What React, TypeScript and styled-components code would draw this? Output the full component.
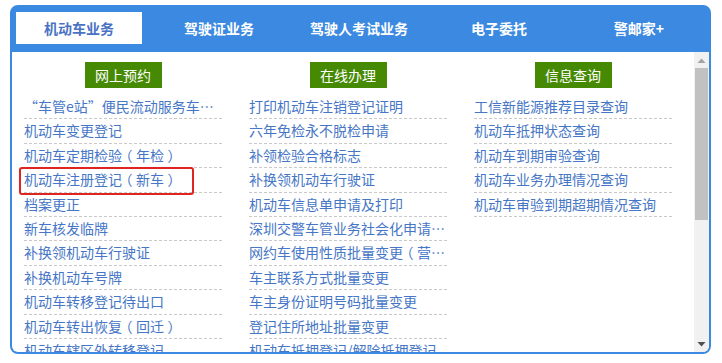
import React from 'react'
import styled, { createGlobalStyle } from 'styled-components'

const GlobalStyle = createGlobalStyle`
  html, body {
    margin: 0;
    padding: 0;
    background: #ffffff;
  }
  body {
    font-family: 'Noto Sans CJK SC', 'Noto Sans', sans-serif;
  }
`

const Page = styled.div`
  padding: 5px 0 0 10px;
`

const Panel = styled.div`
  width: 701px;
  height: 349px;
  box-sizing: border-box;
  border: 2px solid #3b89e0;
  border-radius: 8px;
  background: #3b89e0;
  overflow: hidden;
  display: flex;
  flex-direction: column;
`

const TabBar = styled.div`
  display: flex;
  gap: 14px;
  height: 45px;
  box-sizing: border-box;
  padding: 5px 0 0 4px;
  flex: none;
`

const Tab = styled.div<{ $active?: boolean }>`
  width: 126px;
  height: 32px;
  display: flex;
  align-items: center;
  justify-content: center;
  font-size: 14px;
  font-weight: 700;
  color: ${(p) => (p.$active ? '#4a72c4' : '#ffffff')};
  background: ${(p) => (p.$active ? '#ffffff' : 'transparent')};
  cursor: pointer;
`

const Body = styled.div`
  height: 300px;
  background: #ffffff;
  display: flex;
`

const Columns = styled.div`
  flex: 1;
  overflow: hidden;
  display: grid;
  grid-template-columns: repeat(3, 225px);
  align-items: start;
`

const ScrollRail = styled.div`
  width: 15px;
  flex: none;
  background: #f1f1f1;
  display: flex;
  flex-direction: column;
`

const ScrollButton = styled.div`
  height: 16px;
  flex: none;
  display: flex;
  align-items: center;
  justify-content: center;
`

const ScrollTrack = styled.div`
  flex: 1;
  padding: 0 1px;
`

const ScrollThumb = styled.div`
  height: 152px;
  background: #c1c1c1;
`

const Column = styled.div`
  padding: 10px 15px 0 12px;
  display: flex;
  flex-direction: column;
  align-items: center;
`

const GreenButton = styled.div`
  width: 77px;
  height: 26px;
  background: #468a04;
  color: #ffffff;
  font-size: 14px;
  display: flex;
  align-items: center;
  justify-content: center;
  margin-bottom: 7px;
`

const List = styled.ul`
  list-style: none;
  margin: 0;
  padding: 0;
  width: 198px;
`

const Item = styled.li<{ $marked?: boolean }>`
  position: relative;
  height: 24.4px;
  box-sizing: border-box;
  line-height: 23.4px;
  border-bottom: 1px dashed #c9c9c9;
  font-size: 14px;

  ${(p) =>
    p.$marked &&
    `
    &::after {
      content: '';
      position: absolute;
      left: -5px;
      top: -1px;
      width: 175px;
      height: 28px;
      box-sizing: border-box;
      border: 2px solid #e0241f;
      border-radius: 3px;
    }
  `}
`

const ItemLink = styled.a`
  display: block;
  color: #4676c6;
  text-decoration: none;
  white-space: nowrap;
  overflow: hidden;
  text-overflow: ellipsis;
`

// full-width brackets with the glyph centred in its em box
const Paren = styled.span`
  display: inline-block;
  width: 1em;
  text-align: center;
  font-feature-settings: 'halt';
`

const columns = [
  {
    title: '网上预约',
    items: [
      '“车管e站”便民流动服务车辆预约',
      '机动车变更登记',
      '机动车定期检验（年检）',
      '机动车注册登记（新车）',
      '档案更正',
      '新车核发临牌',
      '补换领机动车行驶证',
      '补换机动车号牌',
      '机动车转移登记待出口',
      '机动车转出恢复（回迁）',
      '机动车辖区外转移登记'
    ]
  },
  {
    title: '在线办理',
    items: [
      '打印机动车注销登记证明',
      '六年免检永不脱检申请',
      '补领检验合格标志',
      '补换领机动车行驶证',
      '机动车信息单申请及打印',
      '深圳交警车管业务社会化申请点查询',
      '网约车使用性质批量变更（营转非）',
      '车主联系方式批量变更',
      '车主身份证明号码批量变更',
      '登记住所地址批量变更',
      '机动车抵押登记/解除抵押登记'
    ]
  },
  {
    title: '信息查询',
    items: [
      '工信新能源推荐目录查询',
      '机动车抵押状态查询',
      '机动车到期审验查询',
      '机动车业务办理情况查询',
      '机动车审验到期超期情况查询'
    ]
  }
]

const tabs = ['机动车业务', '驾驶证业务', '驾驶人考试业务', '电子委托', '警邮家+']

function renderLabel(text: string) {
  return text.split(/([（）])/).map((part, i) =>
    part === '（' || part === '）' ? <Paren key={i}>{part}</Paren> : part
  )
}

export default function App() {
  return (
    <Page>
      <GlobalStyle />
      <Panel>
        <TabBar>
          {tabs.map((t, i) => (
            <Tab key={t} $active={i === 0}>
              {t}
            </Tab>
          ))}
        </TabBar>
        <Body>
          <Columns>
            {columns.map((col) => (
              <Column key={col.title}>
                <GreenButton>{col.title}</GreenButton>
                <List>
                  {col.items.map((item) => (
                    <Item key={item} $marked={item === '机动车注册登记（新车）'}>
                      <ItemLink href="#">{renderLabel(item)}</ItemLink>
                    </Item>
                  ))}
                </List>
              </Column>
            ))}
          </Columns>
          <ScrollRail>
            <ScrollButton>
              <svg width="9" height="5" viewBox="0 0 9 5">
                <path d="M0.5 5 L4.5 0.5 L8.5 5 Z" fill="#a3a3a3" />
              </svg>
            </ScrollButton>
            <ScrollTrack>
              <ScrollThumb />
            </ScrollTrack>
            <ScrollButton>
              <svg width="9" height="5" viewBox="0 0 9 5">
                <path d="M0.5 0 L4.5 4.5 L8.5 0 Z" fill="#505050" />
              </svg>
            </ScrollButton>
          </ScrollRail>
        </Body>
      </Panel>
    </Page>
  )
}
